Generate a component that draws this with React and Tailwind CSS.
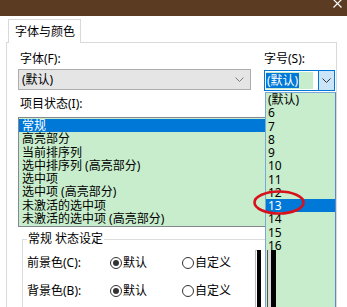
import React from "react";

const stateItems = [
  "常规",
  "高亮部分",
  "当前排序列",
  "选中排序列 (高亮部分)",
  "选中项",
  "选中项 (高亮部分)",
  "未激活的选中项",
  "未激活的选中项 (高亮部分)",
];

const sizes = ["(默认)", "6", "7", "8", "9", "10", "11", "12", "13", "14", "15", "16"];

const Chevron = ({ color }) => (
  <svg width="9" height="5" viewBox="0 0 9 5">
    <path d="M0.5 0.5 L4.5 4.5 L8.5 0.5" fill="none" stroke={color} strokeWidth="1" />
  </svg>
);

const Radio = ({ checked, label }) => (
  <div className="flex items-center gap-[1px]">
    <div className="w-[12px] h-[12px] rounded-full border border-[#333] flex items-center justify-center bg-white">
      {checked && <div className="w-[6px] h-[6px] rounded-full bg-[#333]" />}
    </div>
    <span>{label}</span>
  </div>
);

export default function App() {
  return (
    <div className="w-[347px] h-[307px] overflow-hidden bg-[#f0f0f0] flex flex-col text-[12px] leading-[16px] text-black font-['Noto_Sans','Noto_Sans_CJK_SC',sans-serif] relative">
      {/* Title bar */}
      <div className="h-[16px] shrink-0 bg-[#5b3b22] relative">
        <svg className="absolute left-[333px] top-[-1px]" width="9" height="9" viewBox="0 0 9 9">
          <path d="M0.5 0.5 L8.5 8.5 M8.5 0.5 L0.5 8.5" stroke="#fff" strokeWidth="1.2" />
        </svg>
      </div>

      <div className="flex-1 flex flex-col pl-[6px] pr-[10px] bg-white">
        {/* Tab */}
        <div className="pt-[3px] pl-[2px] flex">
          <div className="w-[73px] h-[24px] border border-b-0 border-[#d9d9d9] bg-white pl-[6px] flex items-center relative z-10">
            字体与颜色
          </div>
        </div>

        {/* Panel */}
        <div className="flex-1 -mt-px border-l border-t border-r border-[#d9d9d9] bg-white pl-[11px] pt-[8px] relative">
          <div className="flex gap-[13px]">
            <div className="w-[233px] flex flex-col gap-[2px]">
              <div className="pl-[2px]">字体(F):</div>
              <div className="h-[21px] border border-[#adadad] bg-[#e5e5e5] flex items-center justify-between pl-[3px] pr-[6px]">
                <span>(默认)</span>
                <Chevron color="#7a7a7a" />
              </div>
            </div>
            <div className="w-[71px] flex flex-col gap-[2px]">
              <div>字号(S):</div>
              <div className="h-[21px] mt-px border border-[#0078d7] bg-white flex">
                <div className="w-[47px] m-[1px] bg-[#c7edcc] flex items-center">
                  <span className="bg-[#0078d7] text-white px-[1px] leading-[15px]">(默认)</span>
                </div>
                <div className="flex-1" />
                <div className="w-[16px] bg-[#cce4f7] border-l border-[#0078d7] flex items-center justify-center">
                  <Chevron color="#333" />
                </div>
              </div>
            </div>
          </div>

          <div className="mt-[5px] pl-[2px]">项目状态(I):</div>
          <div className="mt-[5px] border border-[#828790] bg-[#c7edcc] py-[1px] mr-[1px]">
            {stateItems.map((item, i) => (
              <div
                key={item}
                className={`h-[13.25px] leading-[13px] pl-[3px] whitespace-nowrap ${
                  i === 0 ? "bg-[#0078d7] text-white" : ""
                }`}
              >
                {item}
              </div>
            ))}
          </div>

          {/* Group box */}
          <fieldset className="mt-[4px] ml-[4px] border border-[#dcdcdc] pl-[4px] pb-[10px] min-w-0 mr-[6px]">
            <legend className="px-[1px]">常规 状态设定</legend>
            <div className="flex">
              <div className="flex flex-col gap-[12px] pt-[8px]">
                <div className="flex items-center">
                  <div className="w-[83px]">前景色(C):</div>
                  <div className="w-[72px]"><Radio checked label="默认" /></div>
                  <Radio label="自定义" />
                </div>
                <div className="flex items-center">
                  <div className="w-[83px]">背景色(B):</div>
                  <div className="w-[72px]"><Radio checked label="默认" /></div>
                  <Radio label="自定义" />
                </div>
              </div>
              <div className="ml-[24px] mt-[3px] relative z-30 flex flex-col h-[80px]">
                <div className="flex flex-1">
                  <div className="w-[2px] border-l border-t border-[#bbb]" />
                  <div className="w-[4px] bg-black" />
                  <div className="w-[6px]" />
                  <div className="w-[1px] bg-[#555]" />
                  <div className="w-[3px] bg-[#ddd]" />
                  <div className="w-[5px] bg-black" />
                </div>
              </div>
            </div>
          </fieldset>

          {/* Size drop-down list */}
          <div className="absolute left-[258px] top-[49px] w-[71px] h-[240px] border border-[#7aa7d6] border-r-[#5d8ac0] bg-[#c7edcc] z-20">
            {sizes.map((s) => (
              <div
                key={s}
                className={`h-[13.25px] leading-[13px] pl-[2px] ${s === "13" ? "bg-[#0078d7] text-white" : ""}`}
              >
                {s}
              </div>
            ))}
          </div>

          {/* Red annotation ellipse */}
          <svg className="absolute left-[245px] top-[146px] z-40" width="60" height="28" viewBox="0 0 60 28">
            <ellipse cx="27" cy="13.5" rx="24.5" ry="11" fill="none" stroke="#d6121c" strokeWidth="2.6" />
          </svg>
        </div>
      </div>
    </div>
  );
}
